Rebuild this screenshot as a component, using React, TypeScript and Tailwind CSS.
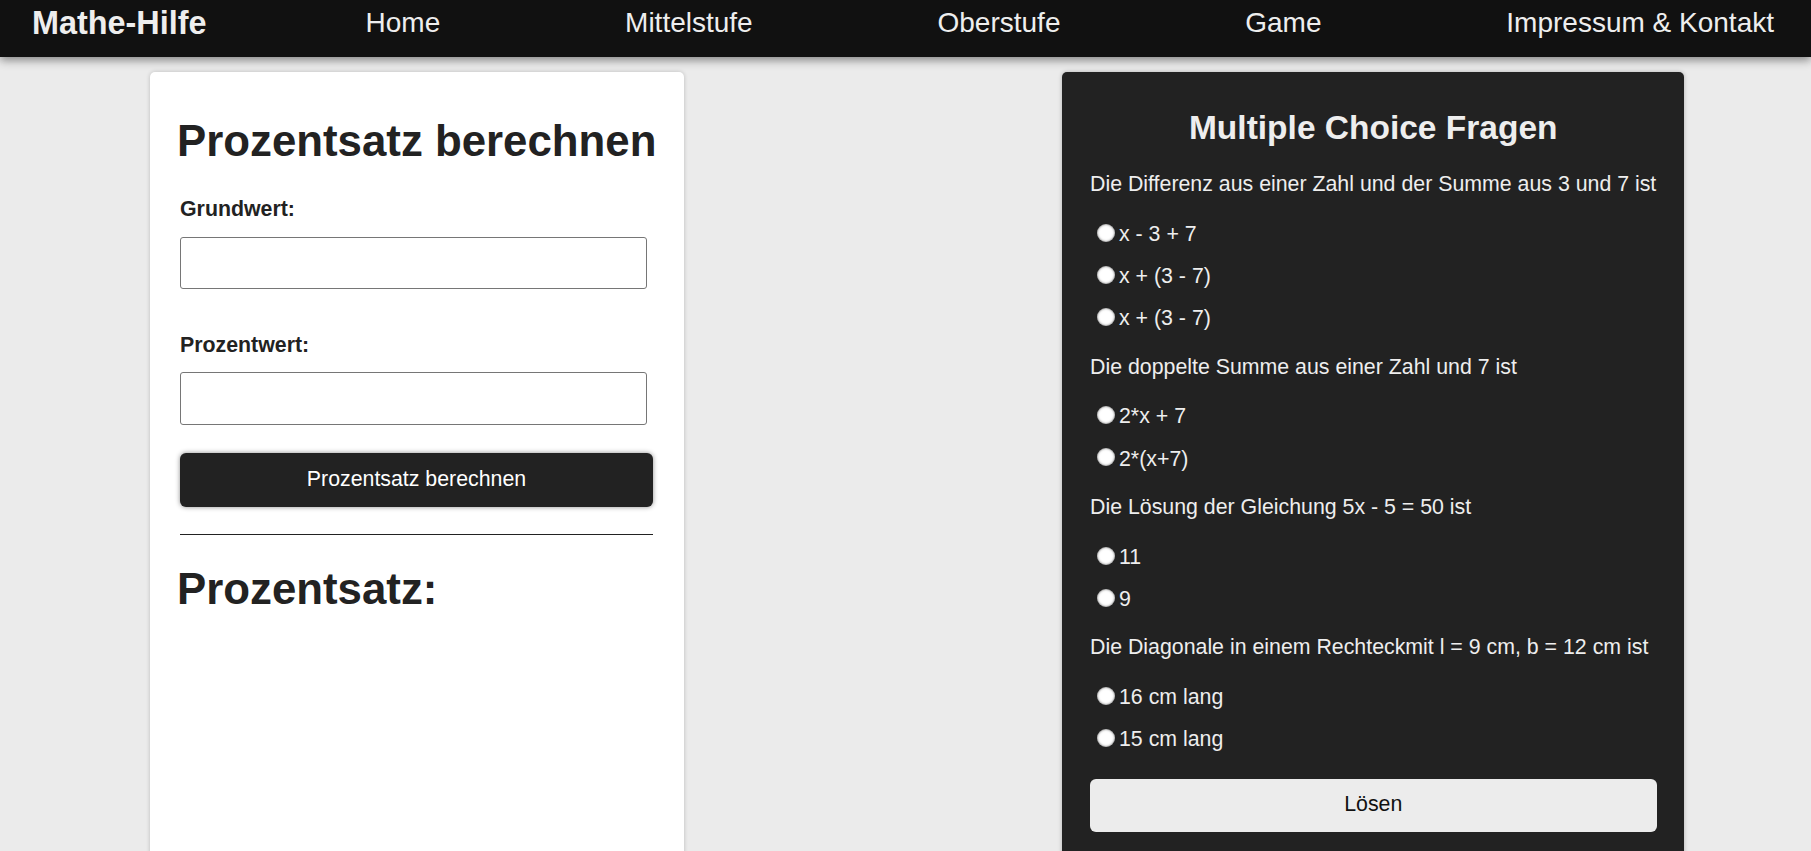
import React from "react";

const questions = [
  {
    text: "Die Differenz aus einer Zahl und der Summe aus 3 und 7 ist",
    answers: ["x - 3 + 7", "x + (3 - 7)", "x + (3 - 7)"],
  },
  {
    text: "Die doppelte Summe aus einer Zahl und 7 ist",
    answers: ["2*x + 7", "2*(x+7)"],
  },
  {
    text: "Die Lösung der Gleichung 5x - 5 = 50 ist",
    answers: ["11", "9"],
  },
  {
    text: "Die Diagonale in einem Rechteckmit l = 9 cm, b = 12 cm ist",
    answers: ["16 cm lang", "15 cm lang"],
  },
];

const links = ["Home", "Mittelstufe", "Oberstufe", "Game", "Impressum & Kontakt"];

const App = () => {
  return (
    <div className="h-screen overflow-hidden bg-[#ebebeb] font-['Liberation_Sans',Arial,sans-serif]">
      {/* Navbar */}
      <nav className="relative z-10 flex h-[57px] items-start bg-[#111] pl-[32px] pr-[37px] text-[#eee] shadow-[0_3px_9px_rgba(0,0,0,0.45)]">
        <a href="#" className="pt-[5px] text-[32.4px] font-bold leading-[1.15]">
          Mathe-Hilfe
        </a>
        <ul className="ml-[159px] flex flex-1 justify-between pt-[7px]">
          {links.map((l) => (
            <li key={l}>
              <a href="#" className="text-[28px] leading-[1.15]">
                {l}
              </a>
            </li>
          ))}
        </ul>
      </nav>

      <main className="flex gap-[378px] pl-[150px] pt-[15px]">
        {/* Prozentsatz Rechner */}
        <section className="h-[820px] w-[534px] rounded-[5px] bg-white px-[30px] pt-[44px] text-[#222] shadow-[0_0_4px_rgba(0,0,0,0.2)]">
          <h1 className="-ml-[3px] whitespace-nowrap text-[43.8px] font-bold leading-[1.15]">
            Prozentsatz berechnen
          </h1>

          <label htmlFor="grundwert" className="mt-[31px] block text-[21.33px] font-bold leading-[1.15]">
            Grundwert:
          </label>
          <input
            id="grundwert"
            type="text"
            className="mt-[15.5px] block h-[52px] w-[467px] rounded-[3px] border border-[#767676] bg-white px-2 text-[21.33px]"
          />

          <label htmlFor="prozentwert" className="mt-[44px] block text-[21.33px] font-bold leading-[1.15]">
            Prozentwert:
          </label>
          <input
            id="prozentwert"
            type="text"
            className="mt-[14.5px] block h-[53px] w-[467px] rounded-[3px] border border-[#767676] bg-white px-2 text-[21.33px]"
          />

          <button
            type="button"
            className="mt-[27.5px] block h-[54px] w-[473px] rounded-[6px] bg-[#222] text-[21.33px] text-white shadow-[0_0_5px_rgba(0,0,0,0.45)]"
          >
            Prozentsatz berechnen
          </button>

          <hr className="mt-[27.5px] h-0 w-[473px] border-t-[1.5px] border-[#222]" />

          <h2 className="-ml-[3px] mt-[29px] text-[43.8px] font-bold leading-[1.15]">Prozentsatz:</h2>
        </section>

        {/* Multiple Choice */}
        <section className="h-[820px] w-[622px] rounded-[5px] bg-[#222] pl-[28px] pr-[27.5px] pt-[37px] text-[#eee] shadow-[0_0_4px_rgba(0,0,0,0.25)]">
          <h2 className="text-center text-[33.5px] font-bold leading-[1.15]">Multiple Choice Fragen</h2>

          <form className="mt-[24.5px]">
            {questions.map((q, qi) => (
              <div key={qi} className={qi > 0 ? "mt-[15px]" : ""}>
                <p className="mb-[16.5px] text-[21.33px] leading-[24.5px]">{q.text}</p>
                {q.answers.map((a, ai) => (
                  <label key={ai} className="flex h-[42.2px] items-center text-[21.33px] leading-[24.5px]">
                    <input
                      type="radio"
                      name={`q${qi}`}
                      className="mb-[3px] ml-[7px] mr-[4px] h-[18px] w-[18px] shrink-0 appearance-none rounded-full bg-white shadow-[inset_0_0_2.5px_rgba(0,0,0,0.7)]"
                    />
                    <span>{a}</span>
                  </label>
                ))}
              </div>
            ))}

            <button
              type="button"
              className="mt-[18px] block h-[53px] w-full rounded-[6px] bg-[#ececec] text-[21.33px] text-[#111]"
            >
              Lösen
            </button>
          </form>
        </section>
      </main>
    </div>
  );
};

export default App;
